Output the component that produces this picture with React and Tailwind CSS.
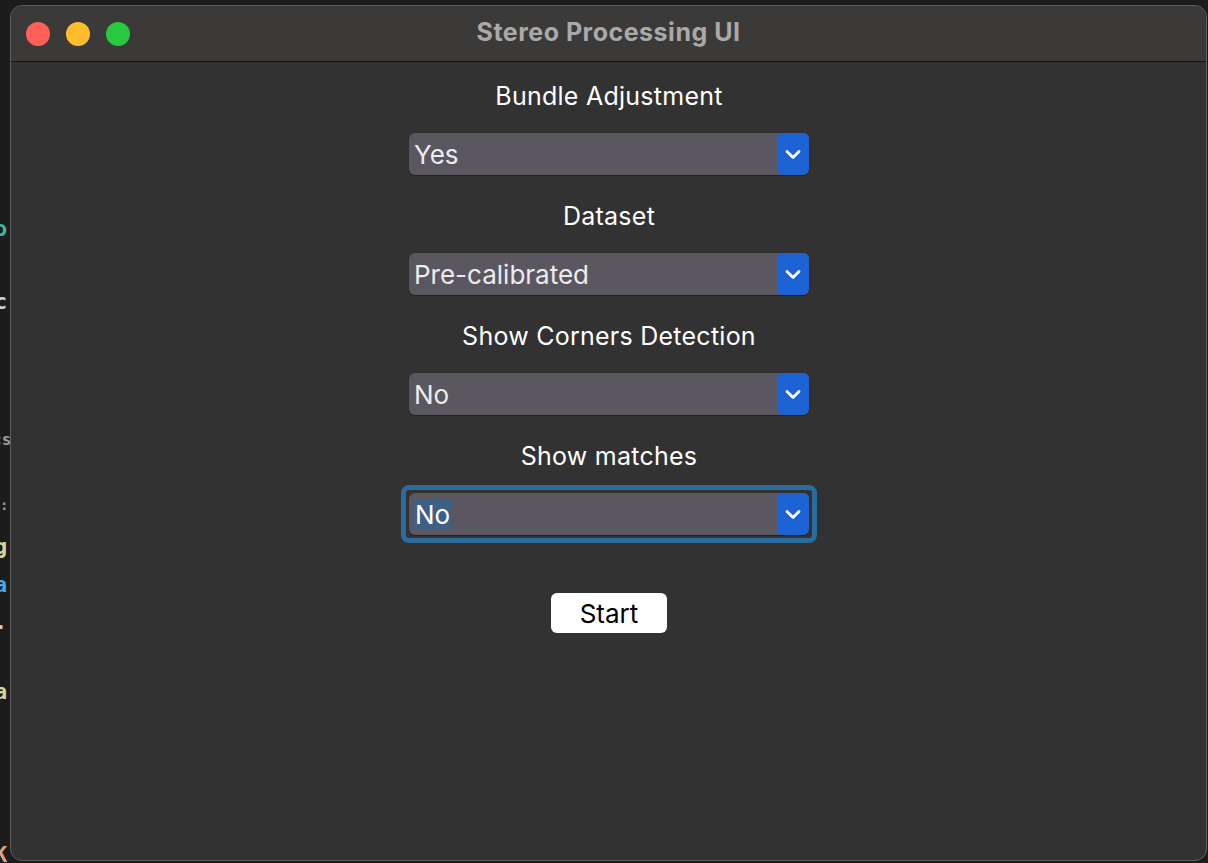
import React from "react";

function Chevron() {
  return (
    <svg width="18" height="11" viewBox="0 0 18 11" fill="none" className="h-[11px] w-[18px] shrink-0">
      <path d="M3 2.5 L9 8.5 L15 2.5" stroke="white" strokeWidth="2.8" strokeLinecap="round" strokeLinejoin="round" />
    </svg>
  );
}

function Select({ value, focused }) {
  const inner = (
    <div className="flex h-[42px] w-[400px] items-center rounded-[6px] bg-[#5b5760] shadow-[0_1px_1px_rgba(0,0,0,0.4)]">
      <div className="flex-1 pl-[5px]">
        <span
          className={
            "text-[26px] leading-[31px] " +
            (focused ? "bg-[#3e5f86] px-[1px] text-white" : "text-[#ececec]")
          }
        >
          {value}
        </span>
      </div>
      <div className="flex h-[42px] w-[32px] shrink-0 items-center justify-center rounded-[6px] bg-[#1d63d6]">
        <Chevron />
      </div>
    </div>
  );
  if (focused) {
    return (
      <div className="-m-[8px] rounded-[8px] border-[5px] border-[#2a6c9e] p-[3px]">
        {inner}
      </div>
    );
  }
  return inner;
}

function Group({ label, value, focused }) {
  return (
    <div className="flex flex-col items-center">
      <div className="h-[28px] text-[25px] leading-[28px] tracking-[0.01em] text-white">{label}</div>
      <div className="mt-[23px]">
        <Select value={value} focused={focused} />
      </div>
    </div>
  );
}

export default function App() {
  return (
    <div
      className="flex h-[863px] w-[1208px] overflow-hidden bg-[#1c1c1c]"
      style={{ fontFamily: "Inter, 'Noto Sans', sans-serif" }}
    >
      <div
        className="relative h-full w-[10px] shrink-0 overflow-hidden text-[22px] font-bold"
        style={{ fontFamily: "'DejaVu Sans Mono', monospace" }}
      >
        <span className="absolute left-[-6px] top-[212px] text-[#3fb8a0]">o</span>
        <span className="absolute left-[-6px] top-[285px] text-[#cfcfcf]">c</span>
        <span className="absolute left-[-8px] top-[428px] text-[16px] text-[#9a9a9a]">cs</span>
        <span className="absolute left-[0px] top-[495px] text-[14px] text-[#9a9a9a]">:</span>
        <span className="absolute left-[-6px] top-[530px] text-[#d6d49a]">g</span>
        <span className="absolute left-[-6px] top-[568px] text-[#4aa8e0]">a</span>
        <span className="absolute left-[-6px] top-[605px] text-[#cfcfcf]">.</span>
        <span className="absolute left-[-6px] top-[675px] text-[#d6d49a]">a</span>
        <span className="absolute left-[-6px] top-[838px] text-[#e0a080]">K</span>
      </div>
      <div className="mt-[5px] mb-[2px] mr-[1px] flex flex-1 flex-col overflow-hidden rounded-[12px] border border-[#5f5f5f] bg-[#323232]">
        <div className="relative flex h-[56px] shrink-0 items-center border-b border-[#141414] bg-[#3b3a38]">
          <div className="flex items-center gap-[16px] pl-[15px]">
            <div className="h-[24px] w-[24px] rounded-full bg-[#fe5f57]" />
            <div className="h-[24px] w-[24px] rounded-full bg-[#febc2e]" />
            <div className="h-[24px] w-[24px] rounded-full bg-[#28c840]" />
          </div>
          <div className="absolute inset-0 flex items-center justify-center pb-[2px] text-[25px] font-bold tracking-[0.02em] text-[#a9a9a9]">
            Stereo Processing UI
          </div>
        </div>
        <div className="flex flex-col items-center pt-[20px] pl-[1px]">
          <div className="flex flex-col gap-[27px]">
            <Group label="Bundle Adjustment" value="Yes" />
            <Group label="Dataset" value="Pre-calibrated" />
            <Group label="Show Corners Detection" value="No" />
            <Group label="Show matches" value="No" focused />
          </div>
          <button className="mt-[58px] flex h-[40px] w-[116px] items-center justify-center rounded-[6px] bg-white text-[26px] text-black">
            Start
          </button>
        </div>
      </div>
    </div>
  );
}
